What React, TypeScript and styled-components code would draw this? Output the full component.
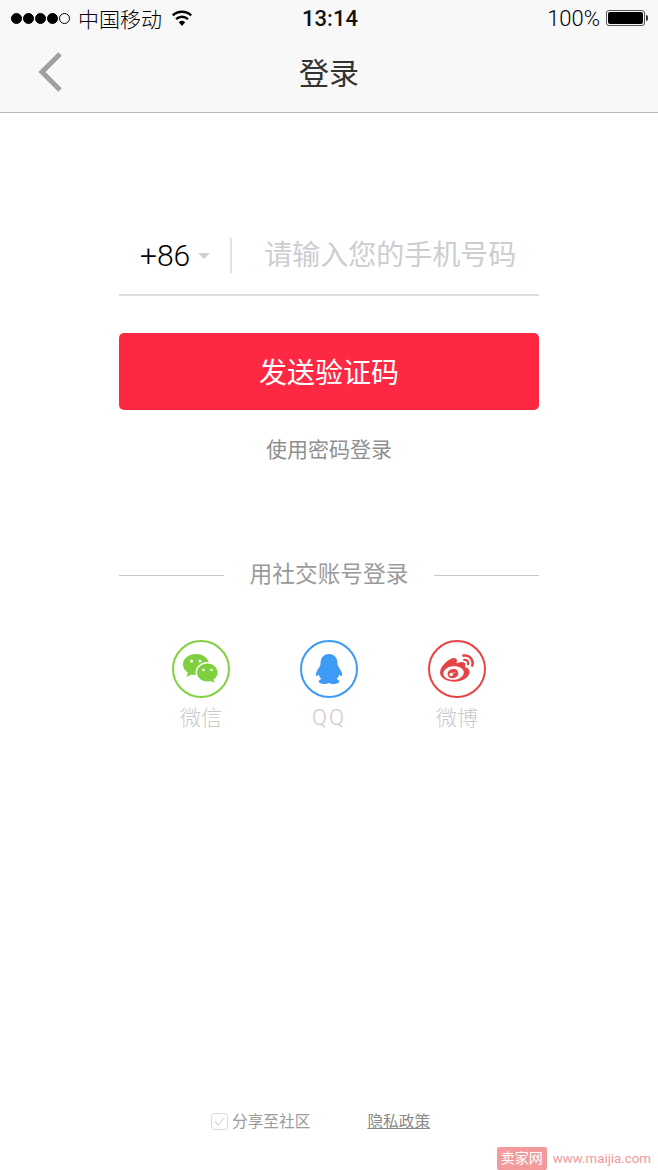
import React from "react"
import styled, { createGlobalStyle } from "styled-components"
import { FaWeibo } from "react-icons/fa"

const sans = `Roboto, "Noto Sans CJK SC", sans-serif`

const Global = createGlobalStyle`
  html, body {
    margin: 0;
    padding: 0;
    background: #fff;
    font-family: ${sans};
  }
`

const Page = styled.div`
  position: relative;
  width: 658px;
  height: 1170px;
  overflow: hidden;
  display: flex;
  flex-direction: column;
  background: #fff;
`

const Header = styled.header`
  height: 112px;
  background: #f8f8f8;
  border-bottom: 1px solid #b8b8b8;
  flex-shrink: 0;
`

const StatusBar = styled.div`
  height: 36px;
  display: grid;
  grid-template-columns: 1fr auto 1fr;
  align-items: center;
  padding: 0 9px 0 11px;
  color: #000;
  font-size: 22px;
`

const StatusLeft = styled.div`
  display: flex;
  align-items: center;
`

const StatusRight = styled.div`
  display: flex;
  align-items: center;
  justify-content: flex-end;
  gap: 6px;
  padding-right: 4px;
`

const Dot = styled.span<{ $off?: boolean }>`
  width: 11px;
  height: 11px;
  margin-right: 1px;
  border-radius: 50%;
  box-sizing: border-box;
  background: ${props => (props.$off ? "transparent" : "#000")};
  border: 1px solid #000;
`

const Carrier = styled.span`
  margin: 0 9px 0 7px;
  font-size: 21px;
  font-weight: 300;
`

const Time = styled.span`
  font-size: 22px;
  font-weight: 500;
  color: #111;
`

const Percent = styled.span`
  font-weight: 300;
`

const Battery = styled.span`
  width: 39px;
  height: 16px;
  box-sizing: border-box;
  padding: 1px;
  border: 1px solid #555;
  border-radius: 3px;
  display: flex;
  position: relative;
  &::before {
    content: "";
    flex: 1;
    background: #000;
    border-radius: 2px;
  }
  &::after {
    content: "";
    position: absolute;
    right: -4px;
    top: 4px;
    width: 2px;
    height: 6px;
    background: #333;
    border-radius: 0 2px 2px 0;
  }
`

const NavBar = styled.nav`
  height: 76px;
  position: relative;
  display: flex;
  align-items: center;
  justify-content: center;
`

const BackIcon = styled.svg`
  position: absolute;
  left: 38px;
  top: 16px;
  width: 24px;
  height: 40px;
`

const Title = styled.h1`
  margin: 0;
  font-size: 30px;
  font-weight: 400;
  color: #333;
  line-height: 40px;
`

const Form = styled.main`
  width: 420px;
  margin: 0 auto;
  flex: 1;
  display: flex;
  flex-direction: column;
`

const PhoneRow = styled.div`
  margin-top: 125px;
  height: 56px;
  border-bottom: 2px solid #dedede;
  display: flex;
  align-items: flex-start;
`

const Code = styled.span`
  margin-left: 21px;
  font-size: 30px;
  font-weight: 300;
  line-height: 36px;
  color: #000;
`

const Caret = styled.span`
  margin: 15px 0 0 8px;
  width: 0;
  height: 0;
  border-left: 6px solid transparent;
  border-right: 6px solid transparent;
  border-top: 6px solid #d0d0d0;
`

const Separator = styled.span`
  width: 2px;
  height: 35px;
  margin-left: 20px;
  background: #e2e2e2;
`

const Placeholder = styled.span`
  margin-left: 32px;
  font-size: 28px;
  line-height: 36px;
  color: #cdcdd2;
`

const Submit = styled.button`
  margin-top: 37px;
  height: 77px;
  padding: 0 0 1px;
  border: 0;
  border-radius: 5px;
  background: #fe2842;
  color: #fff;
  font: 400 28px ${sans};
`

const PasswordLink = styled.a`
  margin-top: 26px;
  text-align: center;
  font-size: 21px;
  line-height: 28px;
  color: #8f8f8f;
`

const Divider = styled.div`
  margin-top: 96px;
  display: flex;
  align-items: center;
  justify-content: space-between;
  font-size: 22.700px;
  line-height: 30px;
  color: #9a9a9a;
  &::before,
  &::after {
    content: "";
    width: 105px;
    height: 1px;
    background: #c8c8c8;
  }
`

const SocialRow = styled.div`
  margin-top: 50px;
  padding-left: 53px;
  display: flex;
  gap: 70px;
`

const Social = styled.div`
  width: 58px;
  display: flex;
  flex-direction: column;
  align-items: center;
`

const Ring = styled.div<{ $color: string }>`
  width: 58px;
  height: 58px;
  box-sizing: border-box;
  border: 2px solid ${props => props.$color};
  border-radius: 50%;
  color: ${props => props.$color};
  display: flex;
  align-items: center;
  justify-content: center;
`

const SocialLabel = styled.span<{ $latin?: boolean }>`
  margin-top: 6px;
  font-size: ${props => (props.$latin ? "22px" : "21px")};
  letter-spacing: ${props => (props.$latin ? "2px" : "0")};
  font-weight: 300;
  line-height: 28px;
  white-space: nowrap;
  color: #cacaca;
`

const Footer = styled.footer`
  height: 59px;
  padding-left: 211px;
  display: flex;
  align-items: flex-start;
  font-size: 15.700px;
  line-height: 22px;
  color: #9b9b9b;
  flex-shrink: 0;
`

const Check = styled.svg`
  width: 17px;
  height: 17px;
  margin: 2px 4px 0 0;
`

const Privacy = styled.a`
  margin-left: 57px;
  color: #8a8a8a;
  text-decoration: underline;
`

const Watermark = styled.div`
  position: absolute;
  right: 7px;
  bottom: 0;
  display: flex;
  align-items: center;
  gap: 6px;
  height: 23px;
  font-size: 13.300px;
  color: #f19a9d;
`

const WatermarkBadge = styled.span`
  width: 50px;
  height: 23px;
  background: #f29a9c;
  color: #fff;
  border-radius: 2px;
  font-size: 14px;
  line-height: 23px;
  text-align: center;
`

const WechatIcon = () => (
  <svg width="36" height="30" viewBox="0 0 36 30">
    <path
      fill="#7ed03e"
      d="M13 0C5.800 0 0 4.600 0 10.400c0 3.300 1.900 6.200 4.900 8.100L3.600 23l5-2.600c1.400.4 2.900.6 4.400.6 7.200 0 13-4.700 13-10.600C26 4.600 20.200 0 13 0z"
    />
    <ellipse cx="24.500" cy="18.500" rx="12" ry="10.500" fill="#fff" />
    <path
      fill="#7ed03e"
      d="M24.500 9.500c-5.800 0-10.500 4-10.500 9s4.700 9 10.500 9c1.200 0 2.300-.2 3.300-.5l3.700 2-1-3.400c2.500-1.700 4-4.200 4-7.100 0-5-4.500-9-10-9z"
    />
    <circle cx="8.500" cy="7" r="1.500" fill="#fff" />
    <circle cx="17" cy="7" r="1.500" fill="#fff" />
    <circle cx="20.500" cy="16" r="1.300" fill="#fff" />
    <circle cx="28.500" cy="16" r="1.300" fill="#fff" />
  </svg>
)

const QqIcon = () => (
  <svg width="28" height="30" viewBox="0 0 28 30">
    <path
      fill="currentColor"
      d="M14 0C8 0 5.500 4.500 5.500 9.500 5.500 11 5 12 4 13.500 2 16.500.5 19.500 1 21.500c.3 1 1.500.5 2.800-1 .5 2 1.500 3.500 2.700 4.500-1.800.7-2.800 1.500-2.800 2.500C3.700 29 6.500 30 9.500 30c2 0 3.500-.5 4.500-1 1 .5 2.500 1 4.500 1 3 0 5.800-1 5.800-2.500 0-1-1-1.800-2.800-2.500 1.200-1 2.200-2.500 2.700-4.500 1.300 1.500 2.500 2 2.800 1 .5-2-1-5-3-8-1-1.500-1.500-2.500-1.500-4C22.500 4.500 20 0 14 0z"
    />
  </svg>
)

const App = () => {
  return (
    <Page>
      <Global />
      <Header>
        <StatusBar>
          <StatusLeft>
            <Dot />
            <Dot />
            <Dot />
            <Dot />
            <Dot $off />
            <Carrier>中国移动</Carrier>
            <svg width="22" height="16" viewBox="0 0 22 16">
              <path
                fill="#000"
                d="M11 16l-3.200-3.700a4.800 4.800 0 0 1 6.400 0zM5.900 10.100L4.300 8.200a10 10 0 0 1 13.400 0l-1.600 1.900a7.500 7.500 0 0 0-10.200 0zM2.600 6.300L1 4.400a15 15 0 0 1 20 0l-1.600 1.900a12.500 12.500 0 0 0-16.800 0z"
              />
            </svg>
          </StatusLeft>
          <Time>13:14</Time>
          <StatusRight>
            <Percent>100%</Percent>
            <Battery />
          </StatusRight>
        </StatusBar>
        <NavBar>
          <BackIcon viewBox="0 0 24 40">
            <path d="M22 2L4 20l18 18" fill="none" stroke="#a0a0a0" strokeWidth="5" />
          </BackIcon>
          <Title>登录</Title>
        </NavBar>
      </Header>
      <Form>
        <PhoneRow>
          <Code>+86</Code>
          <Caret />
          <Separator />
          <Placeholder>请输入您的手机号码</Placeholder>
        </PhoneRow>
        <Submit>发送验证码</Submit>
        <PasswordLink>使用密码登录</PasswordLink>
        <Divider>用社交账号登录</Divider>
        <SocialRow>
          <Social>
            <Ring $color="#84d044">
              <WechatIcon />
            </Ring>
            <SocialLabel>微信</SocialLabel>
          </Social>
          <Social>
            <Ring $color="#3e9bf5">
              <QqIcon />
            </Ring>
            <SocialLabel $latin>QQ</SocialLabel>
          </Social>
          <Social>
            <Ring $color="#e64545">
              <FaWeibo size={34} />
            </Ring>
            <SocialLabel>微博</SocialLabel>
          </Social>
        </SocialRow>
      </Form>
      <Footer>
        <Check viewBox="0 0 17 17">
          <rect x="0.500" y="0.500" width="16" height="16" rx="3" fill="none" stroke="#d8d8d8" />
          <path d="M4 8.500l3.500 3.500L13 5" fill="none" stroke="#d8d8d8" strokeWidth="1.200" />
        </Check>
        <span>分享至社区</span>
        <Privacy>隐私政策</Privacy>
      </Footer>
      <Watermark>
        <WatermarkBadge>卖家网</WatermarkBadge>
        <span>www.maijia.com</span>
      </Watermark>
    </Page>
  )
}

export default App
